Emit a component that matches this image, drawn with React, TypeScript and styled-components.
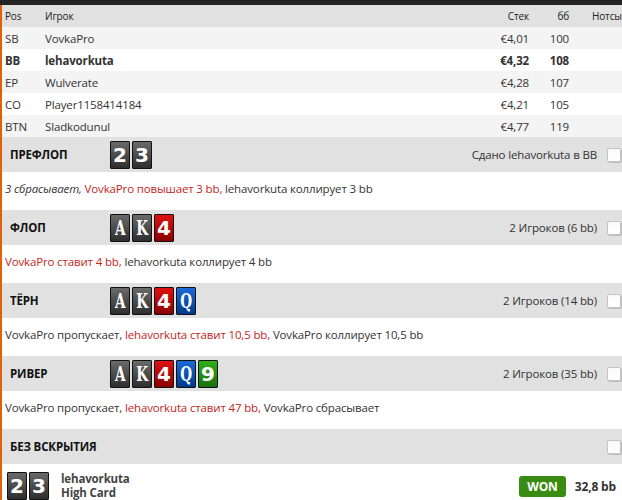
import React from "react";
import styled, { createGlobalStyle } from "styled-components";

const GlobalStyle = createGlobalStyle`
  html, body {
    margin: 0;
    padding: 0;
    background: #ffffff;
    overflow: hidden;
  }
  body {
    font-family: "Open Sans", "Noto Sans", sans-serif;
    font-size: 11.5px;
    letter-spacing: -0.15px;
    color: #333333;
  }
`;

const TopBar = styled.div`
  height: 5px;
  background: #242424;
`;

const Page = styled.div`
  border-left: 2px solid #e0600e;
  min-height: 495px;
`;

const TableRow = styled.div<{ tone: "head" | "odd" | "even"; bold?: boolean }>`
  display: grid;
  grid-template-columns: 40px 1fr 60px 40px 53px;
  align-items: center;
  height: 22px;
  padding-left: 3px;
  background: ${({ tone }) =>
    tone === "head" ? "#e1e1e1" : tone === "odd" ? "#f4f4f4" : "#ffffff"};
  font-size: ${({ tone }) => (tone === "head" ? "10px" : "11.5px")};
  font-weight: ${({ bold }) => (bold ? 700 : 400)};
  color: ${({ tone }) => (tone === "head" ? "#222" : "#333")};
  white-space: nowrap;
`;

const Cell = styled.div<{ right?: boolean; pad?: number }>`
  text-align: ${({ right }) => (right ? "right" : "left")};
  padding-left: ${({ pad }) => pad ?? 0}px;
  overflow: hidden;
`;

const StreetHead = styled.div`
  display: flex;
  align-items: center;
  height: 35px;
  padding: 0 1px 0 8px;
  background: #e1e1e1;
`;

const StreetTitle = styled.div`
  width: 100px;
  font-weight: 700;
  font-size: 11.5px;
  color: #111;
`;

const CardRow = styled.div`
  display: flex;
  gap: 2px;
`;

const suitBg: Record<string, string> = {
  s: "linear-gradient(#6a6a6a, #2e2e2e)",
  h: "linear-gradient(#e01010, #8a0000)",
  d: "linear-gradient(#1a6ad8, #003a8a)",
  c: "linear-gradient(#30b018, #17700a)",
};

const Card = styled.div<{ suit: string }>`
  width: 18px;
  height: 26px;
  border: 1px solid #111;
  border-radius: 1px;
  background: ${({ suit }) => suitBg[suit]};
  color: #fff;
  display: flex;
  align-items: center;
  justify-content: center;
  overflow: hidden;
  letter-spacing: 0;
  line-height: 1;
`;

const Face = styled.span<{ letter?: boolean }>`
  display: inline-block;
  font-family: ${({ letter }) =>
    letter
      ? '"DejaVu Serif Condensed", "DejaVu Serif", serif'
      : '"DejaVu Sans", sans-serif'};
  font-stretch: ${({ letter }) => (letter ? "condensed" : "normal")};
  font-weight: 700;
  font-size: ${({ letter }) => (letter ? "21px" : "20px")};
  transform: ${({ letter }) => (letter ? "scaleX(0.72)" : "none")};
`;

const HeadInfo = styled.div`
  margin-left: auto;
  color: #333;
`;

const Check = styled.div`
  width: 12px;
  height: 12px;
  margin-left: 10px;
  border: 1px solid #c4c4c4;
  border-radius: 2px;
  background: linear-gradient(#fafafa, #ffffff);
  box-shadow: 1px 1px 0 #bdbdbd;
`;

const Actions = styled.div`
  height: 38px;
  padding: 9px 3px 0;
  box-sizing: border-box;
  color: #333;
  white-space: nowrap;
`;

const Red = styled.span`
  color: #c3261b;
`;

const Folded = styled.span`
  font-style: italic;
`;

const ShowRow = styled.div`
  display: flex;
  align-items: flex-start;
  height: 36px;
  padding: 8px 6px 0 5px;
  box-sizing: border-box;
`;

const ShowName = styled.div`
  margin: 0 0 0 12px;
  font-weight: 700;
  color: #444;
`;

const ShowLine = styled.div`
  height: 14px;
  line-height: 14px;
  white-space: nowrap;
`;

const Won = styled.div`
  margin: 4px 0 0 auto;
  height: 21px;
  padding: 0 8px;
  display: flex;
  align-items: center;
  border-radius: 3px;
  background: #3a8b12;
  color: #fff;
  font-weight: 700;
  font-size: 12px;
`;

const Amount = styled.div`
  margin: 6px 0 0 9px;
  font-weight: 700;
  font-size: 12px;
  color: #333;
`;

type C = { r: string; s: string };

const Cards = ({ cards }: { cards: C[] }) => (
  <CardRow>
    {cards.map((c, i) => (
      <Card key={i} suit={c.s}>
        <Face letter={/[AKQJT]/.test(c.r)}>{c.r}</Face>
      </Card>
    ))}
  </CardRow>
);

const players = [
  { pos: "SB", name: "VovkaPro", stack: "€4,01", bb: "100" },
  { pos: "BB", name: "lehavorkuta", stack: "€4,32", bb: "108", me: true },
  { pos: "EP", name: "Wulverate", stack: "€4,28", bb: "107" },
  { pos: "CO", name: "Player1158414184", stack: "€4,21", bb: "105" },
  { pos: "BTN", name: "Sladkodunul", stack: "€4,77", bb: "119" },
];

const flop: C[] = [
  { r: "A", s: "s" },
  { r: "K", s: "s" },
  { r: "4", s: "h" },
];
const turn: C[] = [...flop, { r: "Q", s: "d" }];
const river: C[] = [...turn, { r: "9", s: "c" }];
const hole: C[] = [
  { r: "2", s: "s" },
  { r: "3", s: "s" },
];

export default function App() {
  return (
    <>
      <GlobalStyle />
      <TopBar />
      <Page>
        <TableRow tone="head">
          <Cell>Pos</Cell>
          <Cell>Игрок</Cell>
          <Cell right>Стек</Cell>
          <Cell right>бб</Cell>
          <Cell pad={23}>Нотсы</Cell>
        </TableRow>
        {players.map((p, i) => (
          <TableRow key={p.pos} tone={i % 2 === 0 ? "odd" : "even"} bold={p.me}>
            <Cell>{p.pos}</Cell>
            <Cell>{p.name}</Cell>
            <Cell right>{p.stack}</Cell>
            <Cell right>{p.bb}</Cell>
            <Cell />
          </TableRow>
        ))}

        <StreetHead>
          <StreetTitle>ПРЕФЛОП</StreetTitle>
          <Cards cards={hole} />
          <HeadInfo>Сдано lehavorkuta в BB</HeadInfo>
          <Check />
        </StreetHead>
        <Actions>
          <Folded>3 сбрасывает,</Folded> <Red>VovkaPro повышает 3 bb,</Red>{" "}
          lehavorkuta коллирует 3 bb
        </Actions>

        <StreetHead>
          <StreetTitle>ФЛОП</StreetTitle>
          <Cards cards={flop} />
          <HeadInfo>2 Игроков (6 bb)</HeadInfo>
          <Check />
        </StreetHead>
        <Actions>
          <Red>VovkaPro ставит 4 bb,</Red> lehavorkuta коллирует 4 bb
        </Actions>

        <StreetHead>
          <StreetTitle>ТЁРН</StreetTitle>
          <Cards cards={turn} />
          <HeadInfo>2 Игроков (14 bb)</HeadInfo>
          <Check />
        </StreetHead>
        <Actions>
          VovkaPro пропускает, <Red>lehavorkuta ставит 10,5 bb,</Red> VovkaPro
          коллирует 10,5 bb
        </Actions>

        <StreetHead>
          <StreetTitle>РИВЕР</StreetTitle>
          <Cards cards={river} />
          <HeadInfo>2 Игроков (35 bb)</HeadInfo>
          <Check />
        </StreetHead>
        <Actions>
          VovkaPro пропускает, <Red>lehavorkuta ставит 47 bb,</Red> VovkaPro
          сбрасывает
        </Actions>

        <StreetHead>
          <StreetTitle>БЕЗ ВСКРЫТИЯ</StreetTitle>
          <HeadInfo />
          <Check />
        </StreetHead>
        <ShowRow>
          <Cards cards={hole} />
          <ShowName>
            <ShowLine>lehavorkuta</ShowLine>
            <ShowLine>High Card</ShowLine>
          </ShowName>
          <Won>WON</Won>
          <Amount>32,8 bb</Amount>
        </ShowRow>
      </Page>
    </>
  );
}
